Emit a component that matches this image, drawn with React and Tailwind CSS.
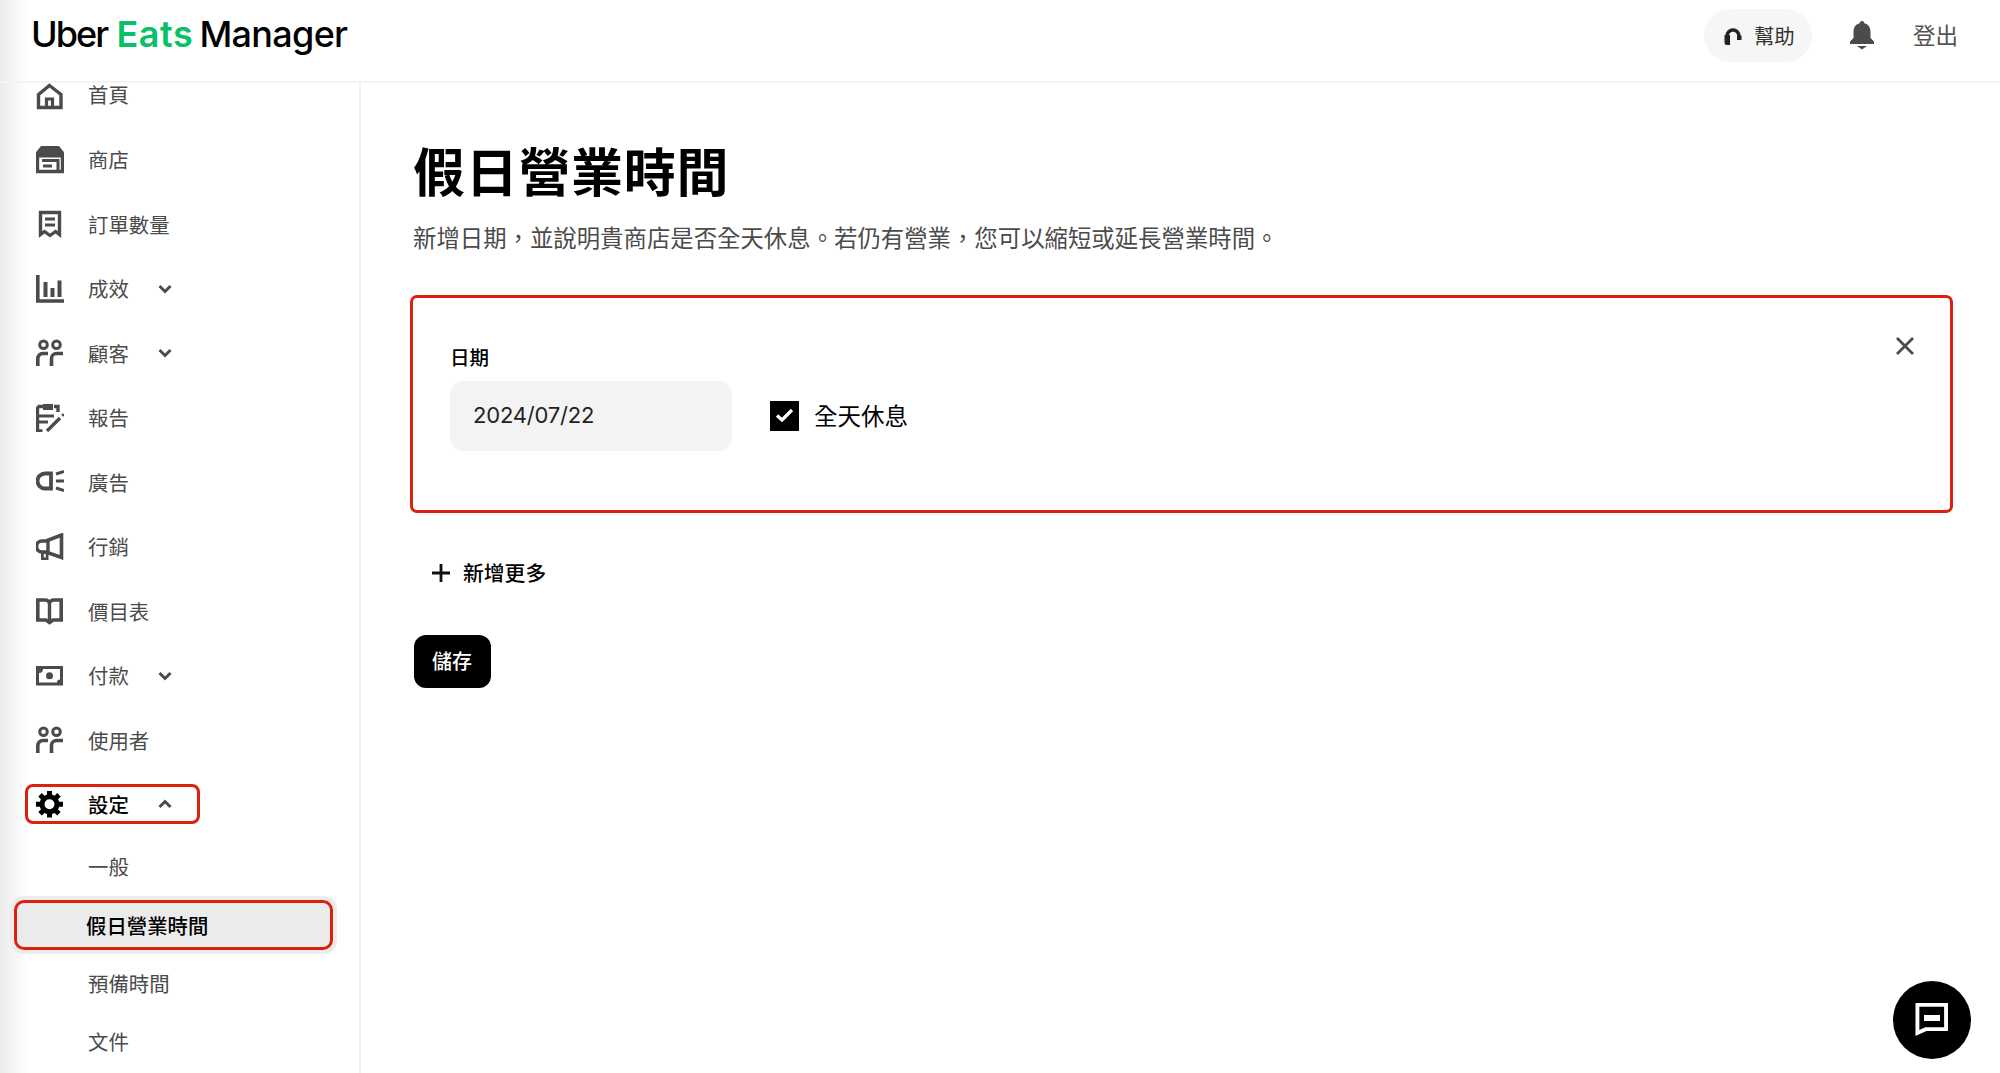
import React from "react";

const I = ({ children, className = "text-[#4b4b4b]" }) => (
  <svg width="28" height="28" viewBox="0 0 28 28" fill="none" className={`shrink-0 ${className}`}>
    {children}
  </svg>
);

const Home = () => (
  <I>
    <path d="M13.5 2.5 L25 11.5 V24.5 H2.5 V11.5 Z" stroke="currentColor" strokeWidth="3.4" />
    <path d="M10.5 24.5 V16 H16.5 V24.5" stroke="currentColor" strokeWidth="3.2" />
  </I>
);
const Store = () => (
  <I>
    <path d="M5 0 H23 L28.5 7 V11.5 H-0.5 V7 Z" fill="currentColor" />
    <path d="M1.5 10 V25.5 H26.5 V10" stroke="currentColor" strokeWidth="3.4" />
    <path d="M6 14.5 H22 V25" stroke="currentColor" strokeWidth="3" />
    <path d="M7 18.5 H16 V21.5 H7 Z" fill="currentColor" />
  </I>
);
const Receipt = () => (
  <I>
    <path d="M4.5 2.5 H23.5 V24.5 L19.5 21.5 L14 25.5 L8.5 21.5 L4.5 24.5 Z" stroke="currentColor" strokeWidth="3.4" />
    <path d="M9 9 H19 M9 15 H19" stroke="currentColor" strokeWidth="3" />
  </I>
);
const Bars = () => (
  <I>
    <path d="M1.8 0 V26 H28" stroke="currentColor" strokeWidth="3.6" />
    <path d="M7.5 7 H11.5 V22 H7.5 Z M14.5 13 H18.5 V22 H14.5 Z M21.5 5.5 H25.5 V22 H21.5 Z" fill="currentColor" />
  </I>
);
const People = () => (
  <I>
    <circle cx="7.5" cy="5.8" r="3.8" stroke="currentColor" strokeWidth="3" />
    <circle cx="20.5" cy="5.8" r="3.8" stroke="currentColor" strokeWidth="3" />
    <path d="M1.8 27 V19.5 A5 5 0 0 1 6.8 14.5 H12 M15.5 27 V19.5 A5 5 0 0 1 20.5 14.5 H27" stroke="currentColor" strokeWidth="3.6" />
  </I>
);
const Report = () => (
  <I>
    <path d="M1.5 2.5 V27 H6.5 M7 2.5 H1.5 M18 2.5 H22 V8" stroke="currentColor" strokeWidth="3.4" />
    <path d="M7 0 H17 V6 H7 Z" fill="currentColor" />
    <path d="M1 12 H18 M1 18 H12" stroke="currentColor" strokeWidth="3" />
    <path d="M11 27 L24 14" stroke="currentColor" strokeWidth="3.4" />
    <path d="M26 10 L28 12" stroke="currentColor" strokeWidth="2.4" />
  </I>
);
const Lamp = () => (
  <I>
    <path d="M15 5.5 H9 A7.5 7.5 0 0 0 9 20.5 H15 Z" stroke="currentColor" strokeWidth="3.8" />
    <path d="M20 6 L28 3.5 M20 13 H28 M20 20 L28 22.5" stroke="currentColor" strokeWidth="3" />
  </I>
);
const Mega = () => (
  <I>
    <path d="M25.5 2 V24.5 L10 19 H6 A5.5 5.5 0 0 1 6 8 H10 Z" stroke="currentColor" strokeWidth="3.6" />
    <path d="M5 18 H12.5 V27 H5 Z" fill="currentColor" />
    <path d="M7.8 21 H9.8 V24.4 H7.8 Z" fill="#fff" />
    <path d="M12 7 V19.5" stroke="currentColor" strokeWidth="3.4" />
  </I>
);
const Book = () => (
  <I>
    <path d="M1.8 3 H9 C11.5 3 13.5 4.5 13.5 7 C13.5 4.5 15.5 3 18 3 H25.2 V23 H17 L13.5 25.5 L10 23 H1.8 Z" stroke="currentColor" strokeWidth="3.6" />
    <path d="M13.5 7 V24" stroke="currentColor" strokeWidth="3.4" />
  </I>
);
const Money = () => (
  <I>
    <path fillRule="evenodd" d="M0 4 H27 V23.5 H0 Z M3 11 V20.5 H21 A3 3 0 0 1 24 17.5 V7 H7 A4 4 0 0 1 3 11 Z" fill="currentColor" />
    <circle cx="13.5" cy="13.8" r="3.5" fill="currentColor" />
  </I>
);
const Gear = () => (
  <I className="text-black">
    <path
      fillRule="evenodd"
      d="M11 1 H16 V4.6 L18.6 5.7 L21.2 3.1 L24.7 6.6 L22.1 9.2 L23.2 11.8 H27 V16.8 H23.2 L22.1 19.4 L24.7 22 L21.2 25.5 L18.6 22.9 L16 24 V27.6 H11 V24 L8.4 22.9 L5.8 25.5 L2.3 22 L4.9 19.4 L3.8 16.8 H0 V11.8 H3.8 L4.9 9.2 L2.3 6.6 L5.8 3.1 L8.4 5.7 L11 4.6 Z M13.5 9.3 A5 5 0 1 0 13.5 19.3 A5 5 0 1 0 13.5 9.3 Z"
      fill="currentColor"
    />
  </I>
);
const Chev = ({ up }) => (
  <svg width="14" height="10" viewBox="0 0 14 10" fill="none" className="text-[#4b4b4b]">
    <path d={up ? "M1.5 8 L7 2.5 L12.5 8" : "M1.5 2 L7 7.5 L12.5 2"} stroke="currentColor" strokeWidth="3" />
  </svg>
);

const items = [
  { t: "商店", i: Store },
  { t: "訂單數量", i: Receipt },
  { t: "成效", i: Bars, c: 1 },
  { t: "顧客", i: People, c: 1 },
  { t: "報告", i: Report },
  { t: "廣告", i: Lamp },
  { t: "行銷", i: Mega },
  { t: "價目表", i: Book },
  { t: "付款", i: Money, c: 1 },
  { t: "使用者", i: People },
];

const NavRow = ({ t, i: Icon, c }) => (
  <div className="flex h-[64.5px] items-center pl-[36px] text-[20.4px] text-[#4b4b4b]">
    <Icon />
    <span className="ml-[24px] leading-none">{t}</span>
    {c ? (
      <span className="ml-[29px] flex">
        <Chev />
      </span>
    ) : null}
  </div>
);

export default function App() {
  return (
    <div
      className="relative flex h-screen w-full flex-col overflow-hidden bg-[linear-gradient(90deg,#ebebeb_0px,#ffffff_28px)] text-black"
      style={{ fontFamily: '"Noto Sans CJK TC", "Noto Sans CJK SC", Inter, sans-serif' }}
    >
      <header className="flex h-[83px] shrink-0 items-center justify-between border-b-2 border-[#f3f3f3] pl-[31px] pr-[42px]">
        <div className="flex items-baseline font-['Inter'] text-[36px] font-medium leading-none -mt-[14px]">
          <span className="tracking-[-1.9px]">Uber</span>
          <span className="ml-[9px] font-semibold tracking-[0.6px] text-[#06c167]">Eats</span>
          <span className="ml-[6px] tracking-[-0.7px]">Manager</span>
        </div>
        <div className="flex items-center -mt-[10px]">
          <div className="flex h-[53px] w-[108px] items-center rounded-full bg-[#f6f6f6] pl-[19px] text-[20.4px] text-[#333]">
            <svg width="20" height="20" viewBox="0 0 20 20" fill="none">
              <path d="M4 15 V10 A6 6 0 0 1 16 10 V13" stroke="#222" strokeWidth="3.4" />
              <path d="M1.5 9 H7 V19 H4 A2.5 2.5 0 0 1 1.5 16.5 Z M14 9.5 H18.5 V14 H14 Z" fill="#222" />
            </svg>
            <span className="ml-[11px] leading-none">幫助</span>
          </div>
          <svg width="24" height="30" viewBox="0 0 24 30" className="ml-[38px] text-[#4b4b4b]">
            <path d="M12 0 A2.6 2.6 0 0 1 14.4 2.2 C18.8 3.4 20.5 7 20.5 11 V17 L24 20.5 V23 H0 V20.5 L3.5 17 V11 C3.5 7 5.2 3.4 9.6 2.2 A2.6 2.6 0 0 1 12 0 Z M7 25 H17 L12 28.5 Z" fill="currentColor" />
          </svg>
          <span className="ml-[39px] -mt-[2px] text-[22.5px] leading-none text-[#545454]">登出</span>
        </div>
      </header>

      <div className="flex min-h-0 flex-1">
        <aside className="w-[361px] shrink-0 border-r-2 border-[#f3f3f3]">
          <div className="flex h-[44.25px] items-start pl-[36px] text-[20.4px] text-[#4b4b4b]">
            <Home />
            <span className="ml-[24px] mt-[1px] leading-none">首頁</span>
          </div>
          {items.map((it) => (
            <NavRow key={it.t} {...it} />
          ))}
          <div className="ml-[25px] mt-[12px] flex h-[40px] w-[175px] items-center rounded-[8px] border-[3px] border-[#dd1f0d] pl-[8px] text-[20.4px] font-medium text-black">
            <Gear />
            <span className="ml-[24px] leading-none">設定</span>
            <span className="ml-[29px] flex">
              <Chev up />
            </span>
          </div>
          <div className="mt-[21.5px] pl-[88px] text-[20.4px] leading-[40px] text-[#4b4b4b]">一般</div>
          <div className="ml-[10px] mt-[10px] flex h-[58px] w-[327px] rounded-[13px] bg-[#ececec] p-[4px]">
            <div className="flex flex-1 items-center rounded-[10px] border-[3px] border-[#dd1f0d] bg-[#ebebeb] pl-[69px] text-[20.4px] font-medium leading-none">
              假日營業時間
            </div>
          </div>
          <div className="mt-[9px] pl-[88px] text-[20.4px] leading-[40px] text-[#4b4b4b]">預備時間</div>
          <div className="mt-[18.5px] pl-[88px] text-[20.4px] leading-[40px] text-[#4b4b4b]">文件</div>
        </aside>

        <main className="min-w-0 flex-1 pl-[52px] pr-[47px] pt-[55.5px]">
          <h1 className="text-[52px] font-bold leading-[62px] tracking-[0.7px]">假日營業時間</h1>
          <p className="mt-[21px] text-[23.4px] leading-[30px] text-[#4b4b4b]">
            {"新增日期\uFF0C並說明貴商店是否全天休息。若仍有營業\uFF0C您可以縮短或延長營業時間。"}
          </p>

          <section className="relative -ml-[3px] mt-[43px] h-[218px] rounded-[7px] border-[3px] border-[#dd1f0d] pl-[37px] pt-[46px]">
            <label className="block text-[19.5px] font-medium leading-[26px]">日期</label>
            <div className="mt-[11px] flex items-center">
              <div className="flex h-[70px] w-[282px] items-center rounded-[14px] bg-[#f3f3f3] pl-[23px] font-['Inter'] text-[22px] tracking-[-0.2px] text-[#222]">
                2024/07/22
              </div>
              <div className="ml-[38px] flex h-[30px] w-[29px] items-center justify-center bg-black">
                <svg width="19" height="15" viewBox="0 0 19 15" fill="none">
                  <path d="M2 7.5 L7 12 L17 2" stroke="#fff" strokeWidth="3.2" />
                </svg>
              </div>
              <span className="ml-[15px] text-[23.5px] leading-none">全天休息</span>
            </div>
            <svg width="20" height="20" viewBox="0 0 20 20" className="absolute right-[35px] top-[38px]" fill="none">
              <path d="M2 2 L18 18 M18 2 L2 18" stroke="#4b4b4b" strokeWidth="2.8" />
            </svg>
          </section>

          <div className="mt-[44px] flex h-[32px] items-center pl-[18px]">
            <svg width="20" height="20" viewBox="0 0 20 20" fill="none">
              <path d="M10 1 V19 M1 10 H19" stroke="#111" strokeWidth="2.8" />
            </svg>
            <span className="ml-[12px] text-[20.8px] font-medium leading-none">新增更多</span>
          </div>

          <button className="mt-[46px] ml-[0.5px] flex h-[53px] w-[77px] items-center justify-center rounded-[12px] bg-black text-[20px] font-medium leading-none text-white">
            儲存
          </button>
        </main>
      </div>

      <div className="absolute bottom-[14px] right-[29px] flex h-[78px] w-[78px] items-center justify-center rounded-full bg-black">
        <svg width="34" height="34" viewBox="0 0 34 34" fill="none">
          <path d="M2.5 3 H32 V28 H11 L2.5 32 Z" stroke="#fff" strokeWidth="4" transform="translate(0 -1) scale(0.97)" />
          <path d="M9 12 H25 V18 H9 Z" fill="#fff" />
        </svg>
      </div>
    </div>
  );
}
